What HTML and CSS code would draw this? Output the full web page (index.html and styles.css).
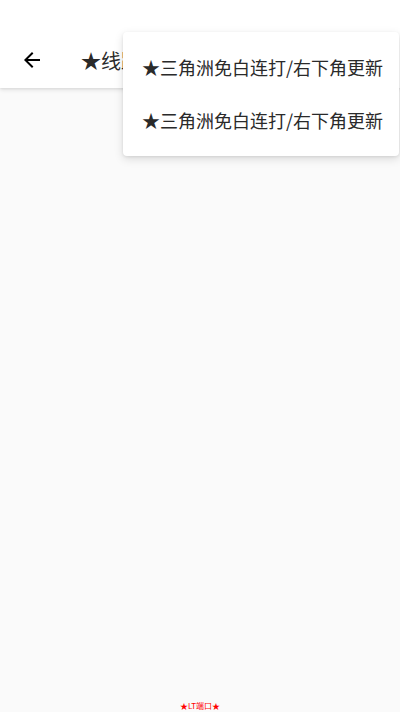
FILE: index.html
```html
<!DOCTYPE html>
<html lang="zh">
<head>
<meta charset="utf-8">
<title>LT</title>
<link rel="stylesheet" href="styles.css">
</head>
<body>
<div class="app">
  <header class="appbar">
    <div class="toolbar">
      <button class="back" aria-label="back">
        <svg width="24" height="24" viewBox="0 0 24 24"><path d="M20 11H7.83l5.59-5.59L12 4l-8 8 8 8 1.41-1.41L7.83 13H20v-2z" fill="#000"/></svg>
      </button>
      <h1 class="title">★线路</h1>
    </div>
  </header>
  <main class="content"></main>
  <footer class="footer">★LT端口★</footer>
  <div class="menu">
    <div class="menu-item">★三角洲免白连打/右下角更新</div>
    <div class="menu-item">★三角洲免白连打/右下角更新</div>
  </div>
</div>
</body>
</html>
```
FILE: styles.css
```css
html, body {
  margin: 0;
  padding: 0;
  height: 100%;
}
body {
  font-family: "Noto Sans CJK SC", "Noto Sans", sans-serif;
  background: #fafafa;
  overflow: hidden;
}
.app {
  position: relative;
  height: 712px;
  display: flex;
  flex-direction: column;
}
.appbar {
  background: #fff;
  padding-top: 32px;
  box-shadow: 0 2px 4px rgba(0,0,0,0.1), 0 1px 2px rgba(0,0,0,0.05);
  position: relative;
  z-index: 1;
}
.toolbar {
  height: 56px;
  display: flex;
  align-items: center;
  padding-left: 20px;
}
.back {
  width: 32px;
  height: 40px;
  border: 0;
  padding: 0;
  background: none;
  display: flex;
  align-items: center;
}
.title {
  margin: 0 0 0 29px;
  font-size: 20px;
  font-weight: 400;
  color: #2a2a2a;
  white-space: nowrap;
}
.content {
  flex: 1;
}
.footer {
  text-align: center;
  color: #ff0000;
  font-size: 8px;
  line-height: 10px;
  padding-bottom: 1px;
}
.menu {
  position: absolute;
  top: 32px;
  right: 1px;
  width: 276px;
  background: #fff;
  border-radius: 4px;
  padding: 9px 0;
  box-shadow: 0 3px 10px rgba(0,0,0,0.13), 0 1px 3px rgba(0,0,0,0.08);
  z-index: 2;
}
.menu-item {
  height: 53px;
  line-height: 53px;
  padding-left: 19px;
  font-size: 18px;
  color: #2a2a2a;
  white-space: nowrap;
}
```
